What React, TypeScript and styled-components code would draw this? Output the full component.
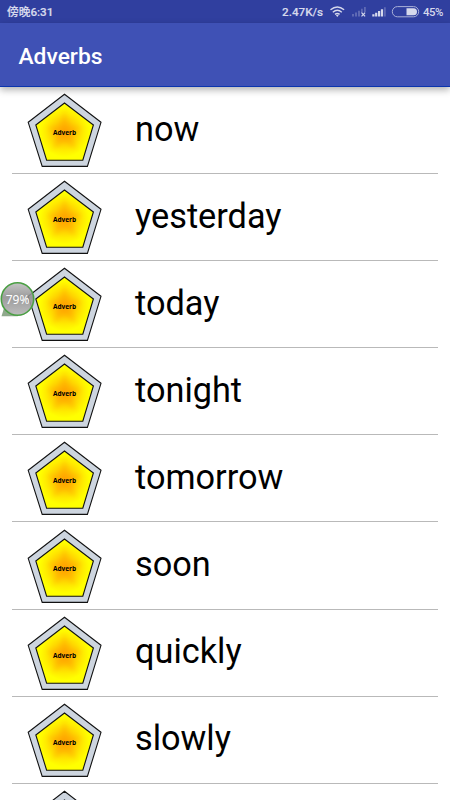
import React from "react";
import styled, { createGlobalStyle } from "styled-components";

const GlobalStyle = createGlobalStyle`
  * { box-sizing: border-box; }
  html, body { margin: 0; height: 100%; overflow: hidden; background: #fff; }
  body { font-family: Roboto, "Noto Sans CJK SC", sans-serif; }
`;

const Screen = styled.main`
  position: relative;
  display: flex;
  flex-direction: column;
  width: 450px;
  height: 800px;
  overflow: hidden;
  background: #fff;
`;

const StatusBar = styled.div`
  flex: none;
  display: flex;
  align-items: center;
  height: 23px;
  padding: 0 7px;
  background: #303f9f;
  color: #d6d9ec;
  font-size: 11.8px;
  font-weight: 500;
  line-height: 22px;
`;

const Clock = styled.span`
  font-size: 11.7px;
  -webkit-text-stroke: 0.2px #d6d9ec;
`;

const Indicators = styled.div`
  margin-left: auto;
  display: flex;
  align-items: center;
`;

const Speed = styled.span`
  width: 47px;
  font-size: 11.7px;
  -webkit-text-stroke: 0.15px #d6d9ec;
`;

const StatusIcons = styled.svg`
  display: block;
  width: 94px;
  height: 23px;
`;

const Percent = styled.span`
  width: 20px;
  font-size: 11.4px;
  letter-spacing: -0.5px;
`;

const AppBar = styled.header`
  flex: none;
  position: relative;
  z-index: 1;
  display: flex;
  align-items: center;
  height: 64px;
  padding: 5px 18px 0;
  background: #3f51b5;
  border-bottom: 1px solid #0b35ae;
  box-shadow: 0 3px 7px rgba(0, 0, 0, 0.3);
`;

const Title = styled.h1`
  margin: 0;
  padding-left: 0.5px;
  color: #fff;
  font-size: 22.8px;
  font-weight: 500;
  line-height: 30px;
`;

const List = styled.ul`
  flex: none;
  margin: 0;
  padding: 0 12px;
  list-style: none;
`;

const Row = styled.li`
  display: flex;
  align-items: center;
  height: 87.1px;
  border-bottom: 1px solid #b9b9b9;
`;

const Badge = styled.svg`
  flex: none;
  display: block;
  width: 105px;
  height: 86px;
`;

const BadgeLabel = styled.text`
  font-family: "Open Sans", "Noto Sans", sans-serif;
  font-size: 6.5px;
  font-weight: 700;
  text-anchor: middle;
`;

const Word = styled.span`
  padding: 0 0 2px 18px;
  color: #000;
  font-size: 34.3px;
  line-height: 43px;
`;

const Bubble = styled.svg`
  position: absolute;
  z-index: 2;
  left: 0;
  top: 278px;
  width: 40px;
  height: 42px;
`;

const BubbleLabel = styled.text`
  font-family: "Noto Sans", sans-serif;
  font-size: 12px;
  text-anchor: middle;
  fill: #fff;
`;

const words = ["now", "yesterday", "today", "tonight", "tomorrow", "soon", "quickly", "slowly"];

function PentagonBadge({ id, label }: { id: string; label?: string }) {
  return (
    <Badge viewBox="12 87 105 86">
      <defs>
        <radialGradient id={id + "g"} gradientUnits="userSpaceOnUse" cx="64.5" cy="132" r="25">
          <stop offset="0" stopColor="#ffa800" />
          <stop offset="0.4" stopColor="#ffc800" />
          <stop offset="0.75" stopColor="#ffec00" />
          <stop offset="1" stopColor="#ffff00" />
        </radialGradient>
        <filter id={id + "b"} x="-50%" y="-50%" width="200%" height="200%">
          <feGaussianBlur stdDeviation="2.6" />
        </filter>
      </defs>
      <path d="M64.5 94.3 101 122.3 87.4 166.4H42.2L28.2 122.3Z" fill="#cdd5df" stroke="#111" strokeWidth="1.1" />
      <path d="M64.5 103 93.4 125 82.8 160.2H46.6L35.8 125Z" fill={"url(#" + id + "g)"} stroke="#111" strokeWidth="1.1" />
      <path
        d="M64.5 108 68.5 127 83 127 71 134.5 77 151 64.5 140 52 151 58 134.5 46 127 60.5 127Z"
        fill="#ff9000"
        opacity="0.32"
        filter={"url(#" + id + "b)"}
      />
      {label && (
        <BadgeLabel x="64.5" y="135.4">
          {label}
        </BadgeLabel>
      )}
    </Badge>
  );
}

function SystemIcons() {
  return (
    <StatusIcons viewBox="329 0 94 23" fill="#d6d9ec">
      <g fill="none" stroke="#d6d9ec" strokeWidth="1.4">
        <path d="M330.5 9.8Q337.3 4 344.1 9.8M332.8 12.2Q337.3 8.4 341.8 12.2M335 14.4Q337.3 12.6 339.6 14.4" />
      </g>
      <path d="M335.9 15.3Q337.3 14.4 338.7 15.3L337.3 16.9Z" />
      <g opacity="0.28">
        <path d="M352 14h2v2.4h-2zM355 12.5h2v3.9h-2zM358 10.8h2v5.6h-2zM361 8.8h1.8v4h-1.8zM364 7h1.8v5h-1.8z" />
      </g>
      <path d="m361.5 12.7 3.6 3.7m0-3.7-3.6 3.7" stroke="#d6d9ec" strokeWidth="1.2" />
      <path d="M372.3 14.2h2.2v2.2h-2.2zM375.1 12.8h2.2v3.6h-2.2zM378 11.1h2.2v5.3H378zM380.9 9.2h2.2v7.2h-2.2z" />
      <path d="M384 7.2h1.8v9.2H384z" opacity="0.28" />
      <rect x="392.3" y="6.6" width="26.4" height="10.2" rx="5.1" fill="none" stroke="#a9b0d8" strokeWidth="1" />
      <path d="M406.5 8.2h7a3.5 3.5 0 0 1 0 7h-7z" />
    </StatusIcons>
  );
}

export default function App() {
  return (
    <Screen>
      <GlobalStyle />
      <StatusBar>
        <Clock>傍晚6:31</Clock>
        <Indicators>
          <Speed>2.47K/s</Speed>
          <SystemIcons />
          <Percent>45%</Percent>
        </Indicators>
      </StatusBar>
      <AppBar>
        <Title>Adverbs</Title>
      </AppBar>
      <List>
        {words.map((word) => (
          <Row key={word}>
            <PentagonBadge id={word} label="Adverb" />
            <Word>{word}</Word>
          </Row>
        ))}
        <Row>
          <PentagonBadge id="next" />
        </Row>
      </List>
      <Bubble viewBox="0 278 40 42">
        <defs>
          <linearGradient id="bubble" x1="0" y1="0" x2="0" y2="1">
            <stop offset="0" stopColor="#bcbcbc" />
            <stop offset="0.45" stopColor="#8e8e8e" />
            <stop offset="1" stopColor="#b4b4b4" />
          </linearGradient>
        </defs>
        <path d="M4 308 1.5 316.2H18Z" fill="#8fa98c" />
        <circle cx="17.5" cy="299" r="16.2" fill="url(#bubble)" fillOpacity="0.88" stroke="#4a9f43" strokeWidth="1.6" />
        <BubbleLabel x="17.6" y="303.6">79%</BubbleLabel>
      </Bubble>
    </Screen>
  );
}
